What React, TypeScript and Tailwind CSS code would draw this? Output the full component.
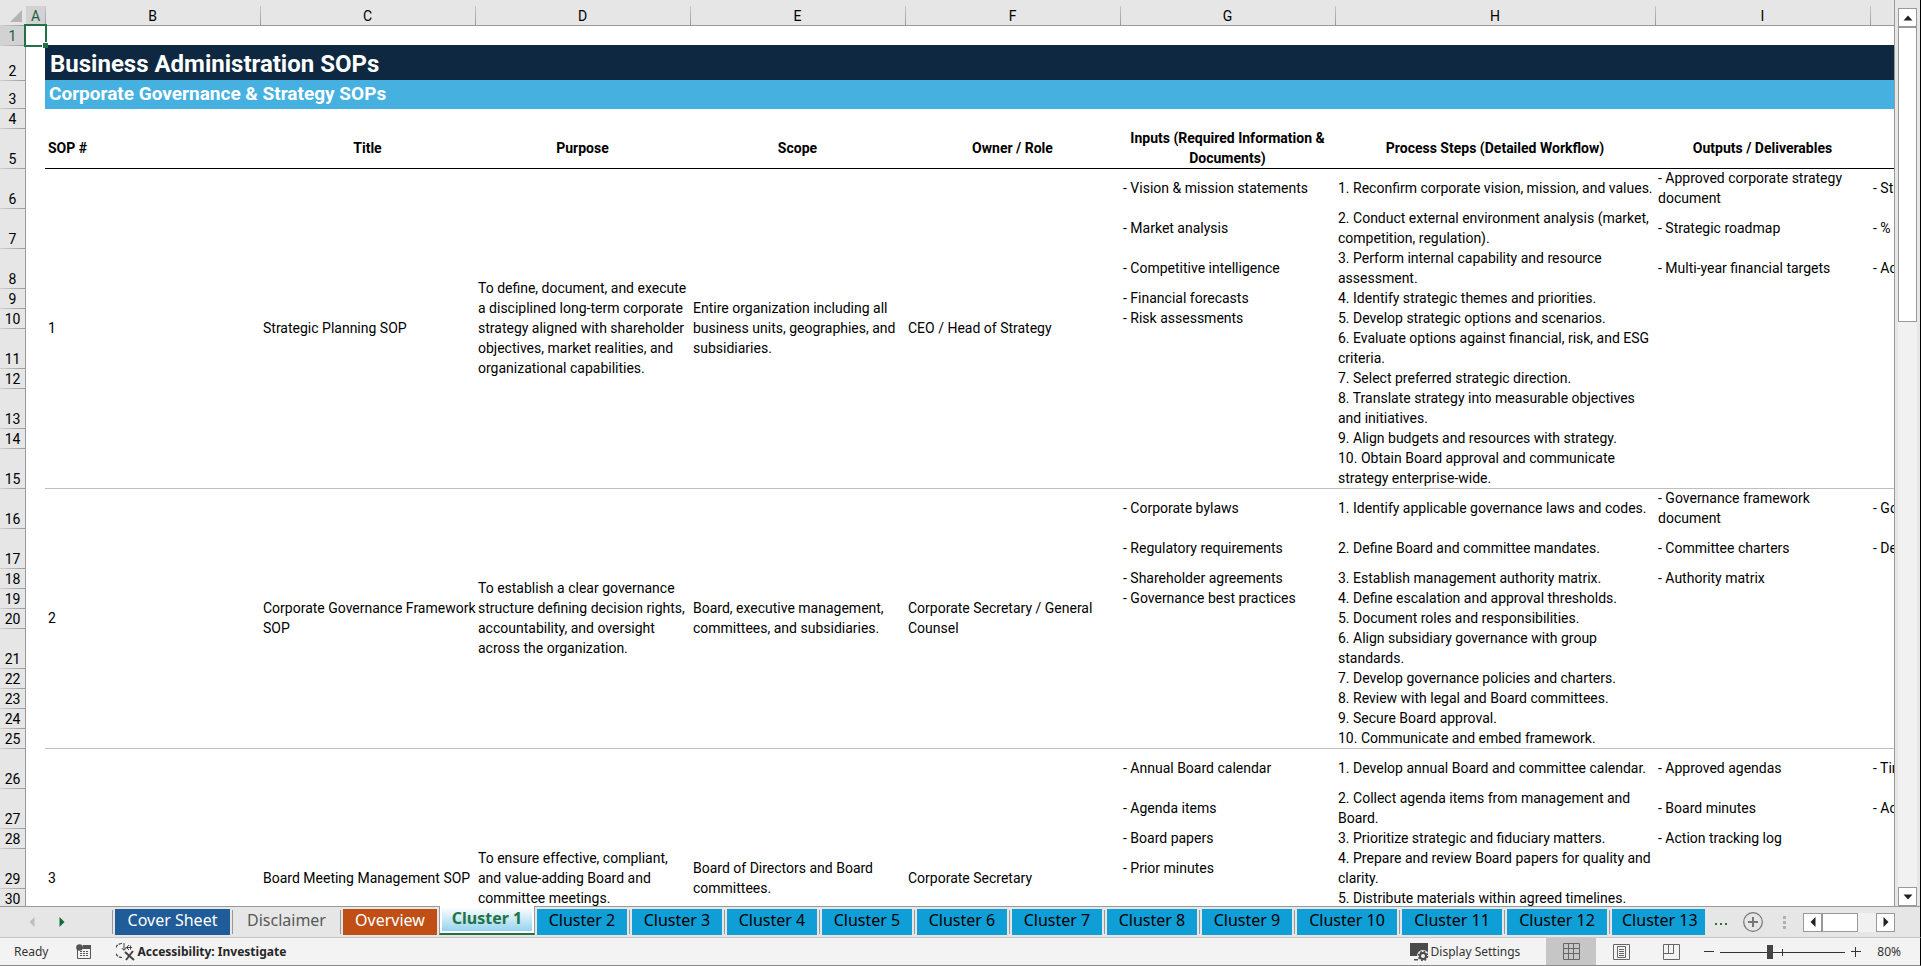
import { Fragment, type ReactNode } from "react";

type Row = {
  n: number | string;
  height: string;
  input?: string;
  step?: string;
  output?: string;
  kpi?: string;
};

interface Sop {
  id: number;
  title: string;
  purpose: string;
  scope: string;
  owner: string;
  rows: Row[];
}

const S = "h-5";
const L = "h-10";

const sops: Sop[] = [
  {
    id: 1,
    title: "Strategic Planning SOP",
    purpose:
      "To define, document, and execute a disciplined long-term corporate strategy aligned with shareholder objectives, market realities, and organizational capabilities.",
    scope: "Entire organization including all business units, geographies, and subsidiaries.",
    owner: "CEO / Head of Strategy",
    rows: [
      { n: 6, height: L, input: "- Vision & mission statements", step: "1. Reconfirm corporate vision, mission, and values.", output: "- Approved corporate strategy document", kpi: "- Str" },
      { n: 7, height: L, input: "- Market analysis", step: "2. Conduct external environment analysis (market, competition, regulation).", output: "- Strategic roadmap", kpi: "- %" },
      { n: 8, height: L, input: "- Competitive intelligence", step: "3. Perform internal capability and resource assessment.", output: "- Multi-year financial targets", kpi: "- Ac" },
      { n: 9, height: S, input: "- Financial forecasts", step: "4. Identify strategic themes and priorities." },
      { n: 10, height: S, input: "- Risk assessments", step: "5. Develop strategic options and scenarios." },
      { n: 11, height: L, step: "6. Evaluate options against financial, risk, and ESG criteria." },
      { n: 12, height: S, step: "7. Select preferred strategic direction." },
      { n: 13, height: L, step: "8. Translate strategy into measurable objectives and initiatives." },
      { n: 14, height: S, step: "9. Align budgets and resources with strategy." },
      { n: 15, height: L, step: "10. Obtain Board approval and communicate strategy enterprise-wide." },
    ],
  },
  {
    id: 2,
    title: "Corporate Governance Framework\nSOP",
    purpose:
      "To establish a clear governance structure defining decision rights, accountability, and oversight across the organization.",
    scope: "Board, executive management, committees, and subsidiaries.",
    owner: "Corporate Secretary / General Counsel",
    rows: [
      { n: 16, height: L, input: "- Corporate bylaws", step: "1. Identify applicable governance laws and codes.", output: "- Governance framework document", kpi: "- Go" },
      { n: 17, height: L, input: "- Regulatory requirements", step: "2. Define Board and committee mandates.", output: "- Committee charters", kpi: "- De" },
      { n: 18, height: S, input: "- Shareholder agreements", step: "3. Establish management authority matrix.", output: "- Authority matrix" },
      { n: 19, height: S, input: "- Governance best practices", step: "4. Define escalation and approval thresholds." },
      { n: 20, height: S, step: "5. Document roles and responsibilities." },
      { n: 21, height: L, step: "6. Align subsidiary governance with group standards." },
      { n: 22, height: S, step: "7. Develop governance policies and charters." },
      { n: 23, height: S, step: "8. Review with legal and Board committees." },
      { n: 24, height: S, step: "9. Secure Board approval." },
      { n: 25, height: S, step: "10. Communicate and embed framework." },
    ],
  },
  {
    id: 3,
    title: "Board Meeting Management SOP",
    purpose: "To ensure effective, compliant, and value-adding Board and committee meetings.",
    scope: "Board of Directors and Board committees.",
    owner: "Corporate Secretary",
    rows: [
      { n: 26, height: L, input: "- Annual Board calendar", step: "1. Develop annual Board and committee calendar.", output: "- Approved agendas", kpi: "- Tin" },
      { n: 27, height: L, input: "- Agenda items", step: "2. Collect agenda items from management and Board.", output: "- Board minutes", kpi: "- Ac" },
      { n: 28, height: S, input: "- Board papers", step: "3. Prioritize strategic and fiduciary matters.", output: "- Action tracking log" },
      { n: 29, height: L, input: "- Prior minutes", step: "4. Prepare and review Board papers for quality and clarity." },
      { n: 30, height: S, step: "5. Distribute materials within agreed timelines." },
      { n: "", height: "h-[100px]" },
    ],
  },
];

const columns = [
  { id: "A", width: "w-[19px]" },
  { id: "B", width: "w-[215px]" },
  { id: "C", width: "w-[215px]" },
  { id: "D", width: "w-[215px]" },
  { id: "E", width: "w-[215px]" },
  { id: "F", width: "w-[215px]" },
  { id: "G", width: "w-[215px]" },
  { id: "H", width: "w-[320px]" },
  { id: "I", width: "w-[215px]" },
  { id: "", width: "w-[215px]" },
];

const headings = [
  "Title",
  "Purpose",
  "Scope",
  "Owner / Role",
  "Inputs (Required Information & Documents)",
  "Process Steps (Detailed Workflow)",
  "Outputs / Deliverables",
];

const tabs = [
  { name: "Cover Sheet", style: "w-[115px] bg-[#1f5c99] text-white" },
  { name: "Disclaimer", style: "w-[103px] text-[#595959]" },
  { name: "Overview", style: "w-[94px] bg-[#c04f15] text-white" },
  { name: "Cluster 1", style: "" },
  { name: "Cluster 2", style: "w-[90px]" },
  { name: "Cluster 3", style: "w-[90px]" },
  { name: "Cluster 4", style: "w-[90px]" },
  { name: "Cluster 5", style: "w-[90px]" },
  { name: "Cluster 6", style: "w-[90px]" },
  { name: "Cluster 7", style: "w-[90px]" },
  { name: "Cluster 8", style: "w-[90px]" },
  { name: "Cluster 9", style: "w-[90px]" },
  { name: "Cluster 10", style: "w-[100px]" },
  { name: "Cluster 11", style: "w-[100px]" },
  { name: "Cluster 12", style: "w-[100px]" },
  { name: "Cluster 13", style: "w-[93px]" },
];

function RowHead({ n, height, active }: { n: number | string; height: string; active?: boolean }) {
  return (
    <th
      scope="row"
      className={`${height} border-r border-[#999] bg-[linear-gradient(to_right,#d0d0d0,#999)] bg-[length:100%_1px] bg-no-repeat p-0 text-center align-bottom font-normal leading-[18px] ${
        active ? "bg-[#d2d2d2] text-[#1e5c40]" : "bg-[#e6e6e6]"
      }`}
    >
      {n}
    </th>
  );
}

function Cell({ children, span, line }: { children?: ReactNode; span?: number; line: string }) {
  return (
    <td rowSpan={span} className={`py-0 pr-0 pl-[3px] align-middle ${line}`}>
      {children}
    </td>
  );
}

function Sheet() {
  return (
    <table className="w-[2085px] table-fixed border-separate border-spacing-0 font-['Roboto',sans-serif] text-sm leading-5 text-black">
      <colgroup>
        <col className="w-[26px]" />
        {columns.map((c, i) => (
          <col key={i} className={c.width} />
        ))}
      </colgroup>
      <thead>
        <tr>
          <th className="h-[25px] bg-[#e6e6e6] p-0 pr-1 align-bottom">
            <svg className="mb-[3px] ml-auto block" width="12" height="12" viewBox="0 0 12 12">
              <path d="M12 0V12H0Z" fill="#b4b4b4" />
            </svg>
          </th>
          {columns.map((c, i) => (
            <th
              key={i}
              scope="col"
              className={`h-[25px] p-0 pt-[7px] text-center font-normal leading-[18px] ${
                i === 0
                  ? "bg-[linear-gradient(#e6e6e6,#e6e6e6)] bg-[#d2d2d2] bg-[length:100%_6px] bg-no-repeat text-[#1e5c40]"
                  : "bg-[#e6e6e6] bg-[linear-gradient(to_bottom,#c8c8c8,#999)] bg-[length:1px_19px] bg-[position:0_100%] bg-no-repeat"
              }`}
            >
              {c.id}
            </th>
          ))}
        </tr>
      </thead>
      <tbody>
        <tr>
          <RowHead n={1} height="h-5" active />
          <td className="relative border-t border-[#999] p-0">
            <div className="absolute -top-[2px] -left-[2px] z-10 h-[23px] w-[23px] border-2 border-[#217346]">
              <span className="absolute -right-[3px] -bottom-[3px] h-[6px] w-[6px] border-t border-l border-white bg-[#217346]" />
            </div>
          </td>
          <td colSpan={9} className="border-t border-[#999] p-0" />
        </tr>
        <tr>
          <RowHead n={2} height="h-[35px]" />
          <td />
          <td colSpan={9} className="bg-[#0e2841] px-[5px] py-0 align-bottom text-2xl leading-[32px] font-bold text-white">
            Business Administration SOPs
          </td>
        </tr>
        <tr>
          <RowHead n={3} height="h-7" />
          <td />
          <td colSpan={9} className="bg-[#46b1e1] px-1 py-0 align-middle text-[19px] leading-7 font-bold text-white">
            Corporate Governance &amp; Strategy SOPs
          </td>
        </tr>
        <tr>
          <RowHead n={4} height="h-5" />
          <td />
          <td colSpan={9} className="border-t border-[#46b1e1] p-0" />
        </tr>
        <tr className="font-bold">
          <RowHead n={5} height="h-10" />
          <td />
          <th className="px-[3px] py-0 text-left">SOP #</th>
          {headings.map((h) => (
            <th key={h} className="px-[3px] py-0 text-center">
              {h}
            </th>
          ))}
          <td />
        </tr>
        {sops.map((sop) => {
          const line = sop.id === 1 ? "shadow-[inset_0_1px_0_#000]" : "shadow-[inset_0_1px_0_#bfbfbf]";
          return (
            <Fragment key={sop.id}>
              {sop.rows.map((row, i) => {
                const top = i === 0 ? line : "";
                return (
                  <tr key={row.n}>
                    <RowHead n={row.n} height={row.height} />
                    <td />
                    {i === 0 && (
                      <>
                        <Cell span={sop.rows.length} line={line}>{sop.id}</Cell>
                        <Cell span={sop.rows.length} line={`whitespace-pre ${line}`}>{sop.title}</Cell>
                        <Cell span={sop.rows.length} line={line}>{sop.purpose}</Cell>
                        <Cell span={sop.rows.length} line={line}>{sop.scope}</Cell>
                        <Cell span={sop.rows.length} line={line}>{sop.owner}</Cell>
                      </>
                    )}
                    <Cell line={top}>{row.input}</Cell>
                    <Cell line={top}>{row.step}</Cell>
                    <Cell line={top}>{row.output}</Cell>
                    <Cell line={top}>{row.kpi}</Cell>
                  </tr>
                );
              })}
            </Fragment>
          );
        })}
      </tbody>
    </table>
  );
}

function Arrow({ d, fill = "#222" }: { d: string; fill?: string }) {
  return (
    <svg width="10" height="10" viewBox="0 0 10 10">
      <path d={d} fill={fill} />
    </svg>
  );
}

const UP = "M0.5 7.5L5 2.5L9.5 7.5Z";
const DOWN = "M0.5 2.5L5 7.5L9.5 2.5Z";
const LEFT = "M7.5 0L2.5 5L7.5 10Z";
const RIGHT = "M2.5 0L7.5 5L2.5 10Z";

function VerticalScroll() {
  return (
    <div className="flex w-[26px] shrink-0 flex-col border-r border-black bg-[#e6e6e6] pt-2 pr-[3px] pl-[3px]">
      <button aria-label="Scroll up" className="flex h-[19px] w-[19px] items-center justify-center border border-[#999] bg-white">
        <Arrow d={UP} />
      </button>
      <div className="w-[19px] flex-1 bg-[#f1f1f1]">
        <div className="h-[295px] border border-[#999] bg-white" />
      </div>
      <button aria-label="Scroll down" className="flex h-[19px] w-[19px] items-center justify-center border border-[#999] bg-white">
        <Arrow d={DOWN} />
      </button>
    </div>
  );
}

function TabBar() {
  return (
    <div className="flex h-8 shrink-0 border-r border-b border-r-black border-b-[#c6c6c6] bg-[#e6e6e6] font-['Noto_Sans',sans-serif]">
      <div className="flex w-[112px] shrink-0 items-center gap-5 border-t border-[#999] pl-[27px]">
        <button aria-label="Previous sheets"><Arrow d={LEFT} fill="#bdbdbd" /></button>
        <button aria-label="Next sheets"><Arrow d={RIGHT} fill="#0e6b37" /></button>
      </div>
      <div className="flex min-w-0 text-base leading-[22px] whitespace-nowrap">
        {tabs.map((tab, i) =>
          i === 3 ? (
            <button
              key={tab.name}
              className="flex h-[29px] w-24 flex-col border-x border-b-2 border-x-[#999] border-b-[#217346] bg-white px-[2px] pt-px pb-[2px] font-bold text-[#217346]"
            >
              <span className="h-full w-full bg-linear-to-b from-white to-[#94d3ee]">{tab.name}</span>
            </button>
          ) : (
            <div
              key={tab.name}
              className={`flex h-[29px] border-t border-[#999] pt-[2px] ${i === 2 || i === 15 ? "pr-[2px]" : ""}`}
            >
              {i !== 4 && <span className="my-px w-px bg-[#999]" />}
              <button
                className={`ml-[2px] h-[26px] overflow-hidden pb-1 ${i < 2 || (i > 3 && i < 15) ? "mr-[2px]" : ""} ${tab.style} ${
                  i > 3 ? "bg-[#0f9ed5] text-black" : ""
                } ${i === 15 ? "pl-[10px] text-left" : "text-center"}`}
              >
                {tab.name}
              </button>
            </div>
          )
        )}
      </div>
      <div className="flex flex-1 items-center border-t border-[#999]">
        <button aria-label="More sheets" className="ml-2 flex gap-[3px] pt-1">
          <span className="h-[2px] w-[2px] bg-[#217346]" />
          <span className="h-[2px] w-[2px] bg-[#217346]" />
          <span className="h-[2px] w-[2px] bg-[#217346]" />
        </button>
        <button aria-label="New sheet" className="ml-4">
          <svg width="20" height="20" viewBox="0 0 20 20" fill="none" stroke="#767676">
            <circle cx="10" cy="10" r="9.3" strokeWidth="1.2" />
            <path d="M10 5V15M5 10H15" strokeWidth="2" />
          </svg>
        </button>
        <div className="ml-5 flex flex-col gap-[2px]">
          <span className="h-[3px] w-[3px] bg-[#b0b0b0]" />
          <span className="h-[3px] w-[3px] bg-[#b0b0b0]" />
          <span className="h-[3px] w-[3px] bg-[#b0b0b0]" />
        </div>
        <div className="mr-[25px] ml-auto flex h-[19px] w-[92px] bg-[#f1f1f1]">
          <button aria-label="Scroll left" className="flex w-[19px] items-center justify-center border border-[#999] bg-white">
            <Arrow d={LEFT} />
          </button>
          <div className="w-9 border border-[#999] bg-white" />
          <button aria-label="Scroll right" className="ml-auto flex w-[19px] items-center justify-center border border-[#999] bg-white">
            <Arrow d={RIGHT} />
          </button>
        </div>
      </div>
    </div>
  );
}

function StatusBar() {
  return (
    <div className="flex h-7 shrink-0 items-center border-r border-b border-r-black border-b-[#8a8a8a] bg-[#f3f3f3] font-['Noto_Sans',sans-serif] text-xs text-[#333]">
      <span className="ml-[14px]">Ready</span>
      <button aria-label="Record macro" className="ml-7">
        <svg width="16" height="16" viewBox="0 0 16 16">
          <path d="M1.5 6V14.5H14.5V2" fill="none" stroke="#555" />
          <path d="M7 1H15V5H6Z" fill="#555" />
          <circle cx="3.5" cy="3.5" r="3.3" fill="#555" />
          <path d="M4 7.5H13M4 9.5H13M4 11.5H13" stroke="#555" strokeDasharray="2 1" />
        </svg>
      </button>
      <button className="ml-6 flex items-center gap-[2px] font-bold text-[#262626]">
        <svg width="19" height="19" viewBox="0 0 19 19" fill="none" stroke="#444">
          <path d="M6 1.5A7 7 0 0 0 6 15.5" strokeWidth="1.2" strokeDasharray="3.5 1.2" />
          <path d="M8 1V8M5.8 6L8 8.4L10.2 6M9.5 5.5H16M13 3L10.5 5.5L13 8M14.5 3.5V7.5" />
          <path d="M9 10L18 18M17 9L10 18" strokeWidth="2" />
        </svg>
        Accessibility: Investigate
      </button>
      <button className="ml-auto flex items-center gap-[2px]">
        <svg width="20" height="20" viewBox="0 0 20 20">
          <path d="M1 1H19V14H1Z" fill="#4a4a4a" />
          <path d="M5 17H9V18.5H5Z" fill="#4a4a4a" />
          <circle cx="14" cy="14" r="6" fill="#f3f3f3" />
          <circle cx="14" cy="14" r="3" fill="none" stroke="#4a4a4a" strokeWidth="2" />
          <circle cx="14" cy="14" r="4.5" fill="none" stroke="#4a4a4a" strokeWidth="1.6" strokeDasharray="1.8 1.73" />
        </svg>
        Display Settings
      </button>
      <button aria-label="Normal view" className="ml-[26px] flex h-full w-[50px] items-center justify-center bg-[#c6c6c6]">
        <svg width="17" height="17" viewBox="0 0 17 17" fill="none" stroke="#666">
          <path d="M0.5 0.5H16.5V16.5H0.5ZM0.5 5.5H16.5M0.5 10.5H16.5M5.5 0.5V16.5M10.5 0.5V16.5" />
        </svg>
      </button>
      <button aria-label="Page layout" className="flex h-full w-[50px] items-center justify-center">
        <svg width="17" height="16" viewBox="0 0 17 16" fill="none" stroke="#666">
          <path d="M0.5 0.5H16.5V15.5H0.5ZM4.5 2.5H12.5V13.5H4.5ZM6 5.5H11M6 7.5H11M6 9.5H11M6 11.5H11" />
        </svg>
      </button>
      <button aria-label="Page break preview" className="flex h-full w-[50px] items-center justify-center">
        <svg width="17" height="16" viewBox="0 0 17 16" fill="none" stroke="#666">
          <path d="M0.5 0.5H16.5V15.5H0.5ZM5.5 0.5V9.5M10.5 0.5V9.5M0.5 9.5H10.5" />
        </svg>
      </button>
      <button aria-label="Zoom out" className="ml-2">
        <svg width="10" height="10" viewBox="0 0 10 10"><path d="M0 4.5H10" stroke="#333" /></svg>
      </button>
      <div className="ml-[6px] flex w-[125px] items-center">
        <svg width="125" height="14" viewBox="0 0 125 14">
          <path d="M0 7.5H125M62.5 4V11" stroke="#333" />
          <path d="M47 0H53V14H47Z" fill="#444" />
        </svg>
      </div>
      <button aria-label="Zoom in" className="ml-[6px]">
        <svg width="10" height="10" viewBox="0 0 10 10"><path d="M0 4.5H10M4.5 0V10" stroke="#333" /></svg>
      </button>
      <button className="mr-[19px] ml-4">80%</button>
    </div>
  );
}

export default function App() {
  return (
    <div className="flex h-screen flex-col overflow-hidden bg-[#e6e6e6]">
      <div className="flex min-h-0 flex-1">
        <div className="min-w-0 flex-1 overflow-hidden border-r border-[#999] bg-white">
          <Sheet />
        </div>
        <VerticalScroll />
      </div>
      <TabBar />
      <StatusBar />
    </div>
  );
}
